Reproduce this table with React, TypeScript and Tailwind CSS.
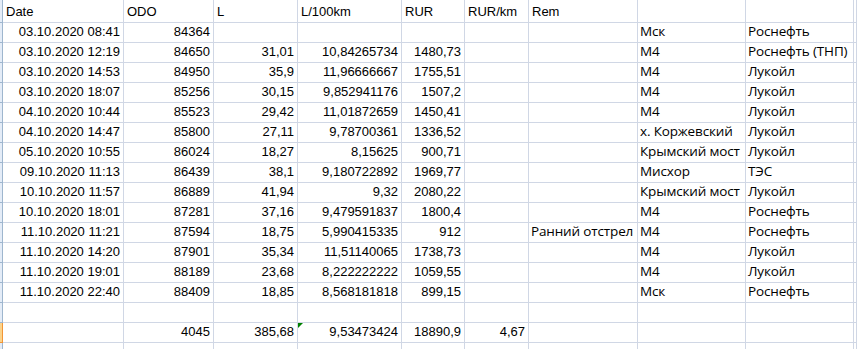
import React from "react"

type Row = {
  date: string
  odo: string
  l?: string
  per100?: string
  rur?: string
  rurkm?: string
  rem?: string
  road?: string
  station?: string
}

const rows: Row[] = [
  { date: "03.10.2020 08:41", odo: "84364", road: "Мск", station: "Роснефть" },
  { date: "03.10.2020 12:19", odo: "84650", l: "31,01", per100: "10,84265734", rur: "1480,73", road: "М4", station: "Роснефть (ТНП)" },
  { date: "03.10.2020 14:53", odo: "84950", l: "35,9", per100: "11,96666667", rur: "1755,51", road: "М4", station: "Лукойл" },
  { date: "03.10.2020 18:07", odo: "85256", l: "30,15", per100: "9,852941176", rur: "1507,2", road: "М4", station: "Лукойл" },
  { date: "04.10.2020 10:44", odo: "85523", l: "29,42", per100: "11,01872659", rur: "1450,41", road: "М4", station: "Лукойл" },
  { date: "04.10.2020 14:47", odo: "85800", l: "27,11", per100: "9,78700361", rur: "1336,52", road: "х. Коржевский", station: "Лукойл" },
  { date: "05.10.2020 10:55", odo: "86024", l: "18,27", per100: "8,15625", rur: "900,71", road: "Крымский мост", station: "Лукойл" },
  { date: "09.10.2020 11:13", odo: "86439", l: "38,1", per100: "9,180722892", rur: "1969,77", road: "Мисхор", station: "ТЭС" },
  { date: "10.10.2020 11:57", odo: "86889", l: "41,94", per100: "9,32", rur: "2080,22", road: "Крымский мост", station: "Лукойл" },
  { date: "10.10.2020 18:01", odo: "87281", l: "37,16", per100: "9,479591837", rur: "1800,4", road: "М4", station: "Роснефть" },
  { date: "11.10.2020 11:21", odo: "87594", l: "18,75", per100: "5,990415335", rur: "912", rem: "Ранний отстрел", road: "М4", station: "Роснефть" },
  { date: "11.10.2020 14:20", odo: "87901", l: "35,34", per100: "11,51140065", rur: "1738,73", road: "М4", station: "Лукойл" },
  { date: "11.10.2020 19:01", odo: "88189", l: "23,68", per100: "8,222222222", rur: "1059,55", road: "М4", station: "Лукойл" },
  { date: "11.10.2020 22:40", odo: "88409", l: "18,85", per100: "8,568181818", rur: "899,15", road: "Мск", station: "Роснефть" },
]

const grid = "grid grid-cols-[3px_121px_90px_84px_104px_63px_64px_109px_108px_108px_1fr]"
const cell = "min-h-0 border-r border-b border-[#d0d7e5] flex items-end pb-[3px] overflow-hidden whitespace-nowrap leading-[15px]"
const num = `${cell} justify-end pr-[3px] font-['Liberation_Sans',Arial,sans-serif] text-[13px] text-black`
const txt = `${cell} justify-start pl-[3px] font-['Liberation_Sans',Arial,sans-serif] text-[13px] text-black`
const cyr = `${cell} justify-start pl-[2px] font-['Open_Sans',sans-serif] text-[13.5px] tracking-[-0.15px] text-black`

function Strip({ active }: { active?: boolean }) {
  return active ? (
    <div className="border-r border-b border-[#f29536] bg-[#fbd38a]" />
  ) : (
    <div className="border-r border-b border-[#9eb6ce] bg-[#e4ecf7]" />
  )
}

export default function App() {
  return (
    <div className="w-[857px] h-[349px] overflow-hidden bg-white text-black">
      {/* header row */}
      <div className={`${grid} h-[23px]`}>
        <Strip />
        <div className={txt}>Date</div>
        <div className={txt}>ODO</div>
        <div className={txt}>L</div>
        <div className={txt}>L/100km</div>
        <div className={txt}>RUR</div>
        <div className={txt}>RUR/km</div>
        <div className={txt}>Rem</div>
        <div className={cell}></div>
        <div className={cell}></div>
        <div className={cell}></div>
      </div>

      {rows.map((r) => (
        <div key={r.date} className={`${grid} h-[20px]`}>
          <Strip />
          <div className={num}>{r.date}</div>
          <div className={num}>{r.odo}</div>
          <div className={num}>{r.l}</div>
          <div className={num}>{r.per100}</div>
          <div className={num}>{r.rur}</div>
          <div className={num}>{r.rurkm}</div>
          <div className={cyr}>{r.rem}</div>
          <div className={cyr}>{r.road}</div>
          <div className={cyr}>{r.station}</div>
          <div className={cell}></div>
        </div>
      ))}

      {/* empty row */}
      <div className={`${grid} h-[20px]`}>
        <Strip />
        {Array.from({ length: 10 }).map((_, i) => (
          <div key={i} className={cell}></div>
        ))}
      </div>

      {/* totals */}
      <div className={`${grid} h-[20px]`}>
        <Strip active />
        <div className={num}></div>
        <div className={num}>4045</div>
        <div className={num}>385,68</div>
        <div className={`${num} relative`}>
          <span className="absolute left-0 top-0 w-0 h-0 border-t-[5px] border-r-[5px] border-t-[#008000] border-r-transparent" />
          9,53473424
        </div>
        <div className={num}>18890,9</div>
        <div className={num}>4,67</div>
        <div className={cell}></div>
        <div className={cell}></div>
        <div className={cell}></div>
        <div className={cell}></div>
      </div>

      {/* partial row */}
      <div className={`${grid} h-[20px]`}>
        <Strip />
        {Array.from({ length: 10 }).map((_, i) => (
          <div key={i} className={cell}></div>
        ))}
      </div>
    </div>
  )
}
